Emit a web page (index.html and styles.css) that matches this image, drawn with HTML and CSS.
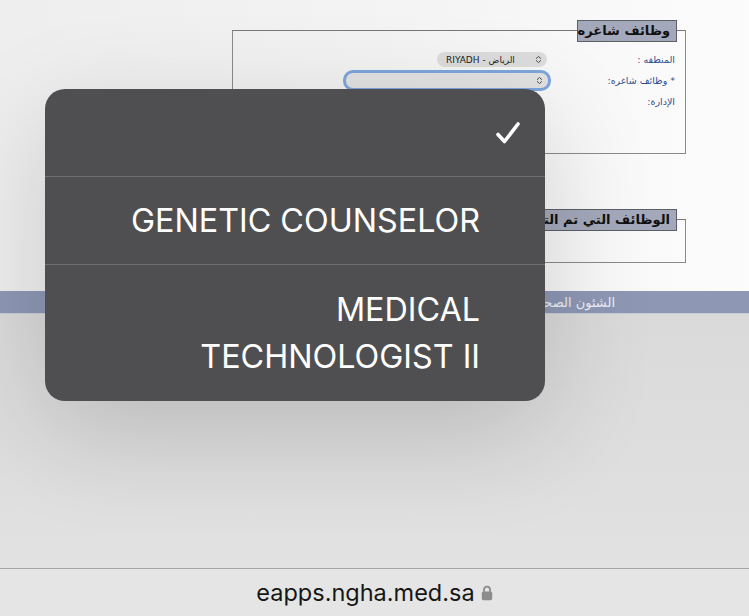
FILE: index.html
```html
<!DOCTYPE html>
<html lang="ar">
<head>
<meta charset="utf-8">
<title>eapps.ngha.med.sa</title>
<link rel="stylesheet" href="styles.css">
</head>
<body>
<div class="screen">
  <main class="page" dir="rtl">
    <div class="upper">
      <section class="box box-vacancies">
        <h2 class="box-title">وظائف شاغره</h2>
        <div class="form-grid">
          <label class="lbl">المنطقه :</label>
          <div class="ctl">
            <div class="select select-region" dir="ltr">
              <span class="select-text">RIYADH - الرياض</span>
              <svg class="chev" viewBox="0 0 8 10" width="7" height="9"><path d="M1.5 3.8 4 1.5 6.5 3.8M1.5 6.2 4 8.5 6.5 6.2" fill="none" stroke="#444" stroke-width="1.1" stroke-linecap="round" stroke-linejoin="round"/></svg>
            </div>
          </div>
          <label class="lbl">* وظائف شاغره:</label>
          <div class="ctl">
            <div class="select select-job" dir="ltr">
              <span class="select-text"></span>
              <svg class="chev" viewBox="0 0 8 10" width="7" height="9"><path d="M1.5 3.8 4 1.5 6.5 3.8M1.5 6.2 4 8.5 6.5 6.2" fill="none" stroke="#444" stroke-width="1.1" stroke-linecap="round" stroke-linejoin="round"/></svg>
            </div>
          </div>
          <label class="lbl">الإدارة:</label>
          <div class="ctl"></div>
        </div>
      </section>
      <section class="box box-applied">
        <h2 class="box-title">الوظائف التي تم التقديم</h2>
      </section>
    </div>
    <div class="bar"><span class="bar-text">الشئون الصحية</span></div>
    <div class="lower"></div>
  </main>
  <footer class="addr">
    <span class="url">eapps.ngha.med.sa</span>
    <svg class="lock" viewBox="0 0 12 16" width="12" height="16"><path d="M3 7V4.6a3 3 0 0 1 6 0V7" fill="none" stroke="#8c8c8c" stroke-width="1.8"/><rect x="0.8" y="6.6" width="10.4" height="8.6" rx="1.6" fill="#8c8c8c"/></svg>
  </footer>

  <div class="picker" role="listbox">
    <div class="opt opt-selected">
      <svg class="check" viewBox="0 0 26 24" width="26" height="24"><path d="M3 13.5 9.5 20.5 23 3" fill="none" stroke="#fff" stroke-width="3.6" stroke-linecap="round" stroke-linejoin="round"/></svg>
    </div>
    <div class="opt">GENETIC COUNSELOR</div>
    <div class="opt opt-last">MEDICAL<br>TECHNOLOGIST II</div>
  </div>
</div>
</body>
</html>
```
FILE: styles.css
```css
* { box-sizing: border-box; }
html, body { margin: 0; padding: 0; }
body { width: 749px; height: 616px; overflow: hidden; background: #e4e4e4; }

.screen { position: relative; width: 749px; height: 616px; display: flex; flex-direction: column; }

.page { height: 568px; display: flex; flex-direction: column; font-family: "DejaVu Sans", sans-serif; }

.upper {
  height: 291px;
  background: linear-gradient(90deg, #eeeeee 0%, #f3f3f3 50%, #fcfcfc 100%);
  padding: 30px 63px 0 0;
  display: flex; flex-direction: column; align-items: flex-start;
}

.box {
  border: 1px solid #8a8a8a;
  border-top-color: #777;
  width: 454px;
  padding: 0 8px 0 0;
  display: flex; flex-direction: column; align-items: flex-start;
}
.box-vacancies { height: 124px; }
.box-applied { height: 44px; margin-top: 65px; }

.box-title {
  margin: -11px 0 0 0;
  background: #a3a9bb;
  border: 1px solid #5e5e66;
  font-size: 13px;
  font-weight: bold;
  color: #111;
  padding: 0 6px;
  height: 22px;
  line-height: 20px;
  white-space: nowrap;
}
.box-vacancies .box-title { width: 100px; text-align: center; }

.form-grid {
  display: grid;
  grid-template-columns: 128px 1fr;
  grid-auto-rows: 21px;
  padding: 7px 2px 0 0;
  align-items: center;
}
.lbl { font-size: 9.5px; color: #2f4f8f; white-space: nowrap; }
.ctl { display: flex; align-items: center; height: 21px; }

.select {
  display: flex; align-items: center; justify-content: space-between;
  background: #dcdcdc; border-radius: 8px;
  font-size: 9px; color: #222;
  padding: 0 5px 0 9px;
}
.select-region { width: 110px; height: 15px; }
.select-job { width: 208px; height: 21px; border: 3px solid #7da6dc; border-radius: 10px; margin-right: -4px; background: #e2e2e2; }
.select-text { white-space: nowrap; }

.bar {
  height: 23px;
  background: #8e98b5;
  border-bottom: 1px solid #c9ccd6;
  display: flex; align-items: center;
  padding-right: 134px;
}
.bar-text { color: #eef0f6; font-size: 13px; white-space: nowrap; }

.lower {
  flex: 1;
  background: linear-gradient(180deg, #dadada 0%, #dedede 60%, #e2e2e2 100%);
}

.addr {
  height: 48px;
  border-top: 1px solid #a6a6a6;
  background: #e5e5e5;
  display: flex; align-items: center; justify-content: center; gap: 6px;
}
.url { font-family: "Inter", "Noto Sans", sans-serif; font-size: 23.5px; color: #161616; }

.picker {
  position: absolute;
  left: 45px; top: 89px;
  width: 500px; height: 312px;
  background: #4f4f51;
  border-radius: 20px;
  box-shadow: 0 30px 110px rgba(0, 0, 0, 0.16);
  font-family: "Inter", "Noto Sans", sans-serif;
  color: #fff;
  overflow: hidden;
  display: flex; flex-direction: column;
}
.opt {
  padding: 20px 65px 20px 20px;
  font-size: 32.3px;
  line-height: 47px;
  text-align: right;
  border-bottom: 1px solid #707072;
}
.opt-selected { height: 88px; display: flex; justify-content: flex-end; align-items: center; padding-right: 24px; }
.opt-last { border-bottom: none; flex: 1; padding-top: 21px; }
```
